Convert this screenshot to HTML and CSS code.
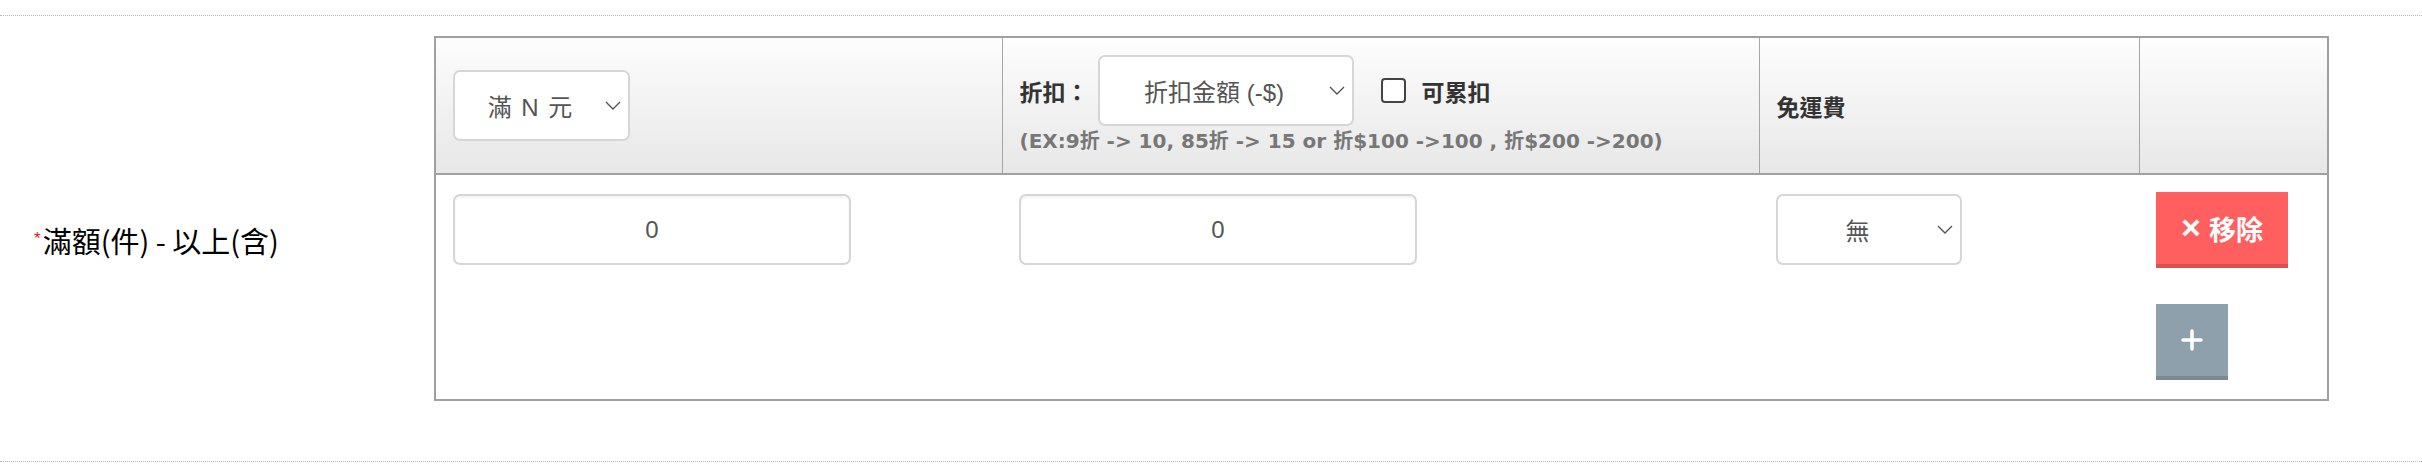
FILE: index.html
```html
<!DOCTYPE html>
<html lang="zh-Hant">
<head>
<meta charset="utf-8">
<title>滿額規則</title>
<link rel="stylesheet" href="styles.css">
</head>
<body>
<div class="page">
  <div class="form-row">
    <div class="row-label"><span class="req">*</span>滿額(件) - 以上(含)</div>
    <table class="rules">
      <colgroup>
        <col class="c1"><col class="c2"><col class="c3"><col class="c4">
      </colgroup>
      <thead>
        <tr>
          <th>
            <div class="select sel-type">
              <span class="sel-text">滿&nbsp;N&nbsp;元</span>
              <svg viewBox="0 0 16 9" class="chev"><polyline points="1,1 8,8 15,1" fill="none" stroke="#555" stroke-width="1.4"/></svg>
            </div>
          </th>
          <th>
            <div class="disc-line">
              <span class="th-label">折扣：</span>
              <div class="select sel-disc">
                <span class="sel-text">折扣金額 (-$)</span>
                <svg viewBox="0 0 16 9" class="chev"><polyline points="1,1 8,8 15,1" fill="none" stroke="#555" stroke-width="1.4"/></svg>
              </div>
              <span class="checkbox"></span>
              <span class="th-label">可累扣</span>
            </div>
            <div class="help">(EX:9折 -&gt; 10, 85折 -&gt; 15 or 折$100 -&gt;100 , 折$200 -&gt;200)</div>
          </th>
          <th><span class="th-label">免運費</span></th>
          <th></th>
        </tr>
      </thead>
      <tbody>
        <tr>
          <td><input class="input" type="text" value="0"></td>
          <td><input class="input" type="text" value="0"></td>
          <td>
            <div class="select sel-ship">
              <span class="sel-text">無</span>
              <svg viewBox="0 0 16 9" class="chev"><polyline points="1,1 8,8 15,1" fill="none" stroke="#555" stroke-width="1.4"/></svg>
            </div>
          </td>
          <td>
            <div class="btn-stack">
              <button class="btn btn-remove" type="button"><span class="x">×</span>移除</button>
              <button class="btn btn-add" type="button"><svg viewBox="0 0 22 22" class="plus"><path d="M11 2 V20 M2 11 H20" stroke="#fff" stroke-width="3.5" stroke-linecap="round" fill="none"/></svg></button>
            </div>
          </td>
        </tr>
      </tbody>
    </table>
  </div>
</div>
</body>
</html>
```
FILE: styles.css
```css
* { box-sizing: border-box; }

body {
  margin: 0;
  background: #fff;
  color: #333;
  font-family: "Liberation Sans", "Noto Sans CJK TC", sans-serif;
}

.page {
  padding-top: 15px;
}

.form-row {
  display: flex;
  align-items: flex-start;
  border-top: 1px dotted #b8b8b8;
  border-bottom: 1px dotted #b8b8b8;
  padding: 20px 0 60px;
}

.row-label {
  flex: none;
  width: 434px;
  padding-left: 34px;
  align-self: center;
  padding-top: 43px;
  font-family: "Noto Sans CJK TC", sans-serif;
  font-size: 29px;
  line-height: 40px;
  color: #000;
  display: flex;
  align-items: center;
}

.req {
  color: #e02020;
  font-family: "Liberation Sans", sans-serif;
  font-size: 17px;
  line-height: 14px;
  margin-right: 2px;
  margin-top: -2px;
}

.rules {
  flex: none;
  width: 1893px;
  table-layout: fixed;
  border-collapse: collapse;
  border: 2px solid #a0a0a0;
}

.c1 { width: 567px; }
.c2 { width: 757px; }
.c3 { width: 380px; }
.c4 { width: 189px; }

.rules th,
.rules td {
  padding: 0 17px;
  text-align: left;
}

.rules thead th {
  height: 137px;
  vertical-align: middle;
  background: linear-gradient(#fdfdfd, #e7e7e7);
  border-left: 1px solid #a6a6a6;
  border-right: 1px solid #a6a6a6;
  border-bottom: 2px solid #a0a0a0;
  font-weight: normal;
}

.rules tbody td {
  vertical-align: top;
  padding: 17px 17px 19px;
}

.select {
  display: flex;
  align-items: center;
  height: 71px;
  border: 2px solid #d6d6d6;
  border-radius: 7px;
  background: #fff;
  font-size: 24px;
  color: #555;
}

.sel-text {
  flex: 1;
  text-align: center;
  white-space: nowrap;
}

.sel-type .sel-text {
  word-spacing: 3px;
}

.chev {
  flex: none;
  width: 16px;
  height: 9px;
  margin-right: 7px;
}

.sel-type { width: 177px; }
.sel-disc { width: 256px; margin-left: 9px; }
.sel-ship { width: 186px; margin-top: 2px; }

.th-label {
  font-size: 23px;
  font-weight: bold;
  color: #333;
  white-space: nowrap;
}

.disc-line {
  display: flex;
  align-items: center;
}

.checkbox {
  flex: none;
  width: 25px;
  height: 25px;
  border: 2px solid #444;
  border-radius: 4px;
  background: #fff;
  margin-left: 27px;
  margin-right: 16px;
}

.help {
  font-family: "DejaVu Sans", "Noto Sans CJK TC", sans-serif;
  font-size: 20px;
  font-weight: bold;
  color: #777;
  line-height: 30px;
  white-space: nowrap;
}

.input {
  display: block;
  width: 398px;
  height: 71px;
  margin: 2px 0 0;
  border: 2px solid #d6d6d6;
  border-radius: 7px;
  box-shadow: inset 0 2px 2px rgba(0, 0, 0, 0.05);
  background: #fff;
  text-align: center;
  font-family: "Liberation Sans", "Noto Sans CJK TC", sans-serif;
  font-size: 24px;
  color: #555;
  padding: 0;
}

.btn-stack {
  display: flex;
  flex-direction: column;
  align-items: flex-start;
  gap: 36px;
}

.btn {
  display: flex;
  align-items: center;
  justify-content: center;
  height: 76px;
  border: none;
  border-radius: 0;
  padding: 0;
  color: #fff;
  font-family: "Liberation Sans", "Noto Sans CJK TC", sans-serif;
  font-weight: bold;
  font-size: 27px;
}

.btn .x {
  font-size: 34px;
  line-height: 1;
  margin-right: 8px;
  margin-top: -2px;
}

.btn-remove {
  width: 132px;
  background: #ff5f5f;
  border-bottom: 4px solid #d95252;
}

.btn-add {
  width: 72px;
  background: #8fa0ad;
  border-bottom: 4px solid #7b8995;
}

.plus {
  width: 22px;
  height: 22px;
}
```
